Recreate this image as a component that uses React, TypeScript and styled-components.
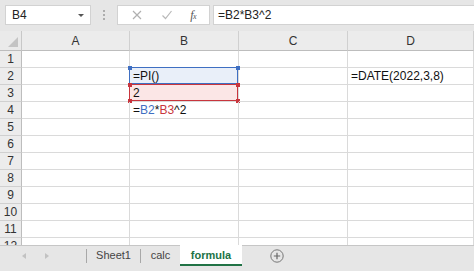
import React from "react";
import styled, { createGlobalStyle } from "styled-components";

const Global = createGlobalStyle`
  html, body { margin: 0; padding: 0; background: #ffffff; }
  body { font-family: "Liberation Sans", Arial, sans-serif; }
  * { box-sizing: border-box; }
`;

const Page = styled.div`
  width: 474px;
  height: 271px;
  display: flex;
  flex-direction: column;
  overflow: hidden;
  background: #ffffff;
`;

const FormulaBar = styled.div`
  height: 31px;
  flex: none;
  display: flex;
  align-items: center;
  gap: 0;
  padding: 5px 0 6px 5px;
  background: #e6e6e6;
`;

const NameBox = styled.div`
  width: 86px;
  height: 20px;
  background: #fff;
  border: 1px solid #d2d2d2;
  display: flex;
  align-items: center;
  justify-content: space-between;
  padding: 0 6px 0 6px;
  font-size: 12px;
  color: #222;
`;

const Caret = styled.span`
  width: 0;
  height: 0;
  border-left: 3px solid transparent;
  border-right: 3px solid transparent;
  border-top: 3px solid #555;
`;

const Dots = styled.div`
  width: 26px;
  display: flex;
  flex-direction: column;
  align-items: center;
  gap: 2px;
  span {
    width: 2px;
    height: 2px;
    background: #9a9a9a;
    border-radius: 50%;
  }
`;

const FxBox = styled.div`
  width: 93px;
  height: 20px;
  background: #fff;
  border: 1px solid #d2d2d2;
  display: flex;
  align-items: center;
  justify-content: space-around;
  padding: 0 4px;
`;

const FxText = styled.span`
  font-family: "Liberation Serif", "Times New Roman", serif;
  font-style: italic;
  font-size: 12px;
  color: #555;
  letter-spacing: -0.5px;
  sub { font-size: 8px; vertical-align: baseline; }
`;

const FormulaInput = styled.div`
  flex: 1;
  height: 20px;
  margin-left: 3px;
  background: #fff;
  border: 1px solid #d2d2d2;
  border-right: none;
  display: flex;
  align-items: center;
  padding-left: 4px;
  font-size: 12px;
  color: #222;
`;

const Grid = styled.div`
  flex: 1;
  display: grid;
  grid-template-columns: 22px 108px 109px 109px 1fr;
  grid-template-rows: 20px;
  grid-auto-rows: 17px;
  overflow: hidden;
  font-size: 12px;
`;

const Corner = styled.div`
  background: #eaeaea;
  border-right: 1px solid #c8c8c8;
  border-bottom: 1px solid #bdbdbd;
  position: relative;
  &::after {
    content: "";
    position: absolute;
    right: 3px;
    bottom: 3px;
    width: 0;
    height: 0;
    border-left: 10px solid transparent;
    border-bottom: 10px solid #c4c4c4;
  }
`;

const ColHead = styled.div`
  background: #ececec;
  border-right: 1px solid #d0d0d0;
  border-bottom: 1px solid #bdbdbd;
  display: flex;
  align-items: center;
  justify-content: center;
  color: #333;
  padding-top: 1px;
`;

const RowHead = styled.div`
  background: #ececec;
  border-right: 1px solid #bdbdbd;
  border-bottom: 1px solid #d0d0d0;
  display: flex;
  align-items: center;
  justify-content: center;
  color: #333;
`;

const Cell = styled.div`
  position: relative;
  border-right: 1px solid #dadada;
  border-bottom: 1px solid #dadada;
  display: flex;
  align-items: center;
  padding-left: 3px;
  color: #111;
  white-space: nowrap;
  overflow: visible;
`;

const Highlight = styled.div<{ $color: string; $fill: string }>`
  position: absolute;
  left: -1px;
  top: -1px;
  right: 0;
  bottom: 0;
  border: 1.5px solid ${(p) => p.$color};
  background: ${(p) => p.$fill};
  z-index: 0;
  pointer-events: none;
`;

const Handle = styled.span<{ $color: string; $x: "l" | "r"; $y: "t" | "b" }>`
  position: absolute;
  width: 4px;
  height: 4px;
  background: ${(p) => p.$color};
  ${(p) => (p.$x === "l" ? "left: -2.5px;" : "right: -2.5px;")}
  ${(p) => (p.$y === "t" ? "top: -2.5px;" : "bottom: -2.5px;")}
`;

const CellText = styled.span`
  position: relative;
  z-index: 1;
`;

const Ref = styled.span<{ $color: string }>`
  color: ${(p) => p.$color};
`;

const TabBar = styled.div`
  height: 26px;
  flex: none;
  display: flex;
  align-items: flex-start;
  background: #e6e6e6;
  border-top: 1px solid #c6c6c6;
  font-size: 11px;
  color: #444;
`;

const NavArea = styled.div`
  width: 86px;
  height: 20px;
  display: flex;
  align-items: center;
  padding-left: 22px;
  gap: 19px;
`;

const Arrow = styled.span<{ $dir: "l" | "r" }>`
  width: 0;
  height: 0;
  border-top: 3px solid transparent;
  border-bottom: 3px solid transparent;
  ${(p) =>
    p.$dir === "l"
      ? "border-right: 4px solid #c2c2c2;"
      : "border-left: 4px solid #c2c2c2;"}
`;

const Tab = styled.div<{ $active?: boolean; $w: number }>`
  width: ${(p) => p.$w}px;
  height: 21px;
  display: flex;
  align-items: center;
  justify-content: center;
  position: relative;
  background: ${(p) => (p.$active ? "#ffffff" : "transparent")};
  color: ${(p) => (p.$active ? "#217346" : "#444")};
  font-weight: ${(p) => (p.$active ? 700 : 400)};
  margin-top: -1px;
  border-bottom: ${(p) => (p.$active ? "2px solid #217346" : "2px solid transparent")};
  padding-top: 1px;
`;

const Sep = styled.div`
  width: 1px;
  height: 14px;
  margin-top: 3px;
  background: #a8a8a8;
`;

const AddBtn = styled.div`
  margin-left: 28px;
  margin-top: 3px;
  width: 14px;
  height: 14px;
  display: flex;
  align-items: center;
  justify-content: center;
`;

const cols = ["A", "B", "C", "D"];
const BLUE = "#3f6fc2";
const RED = "#c8353d";

export default function App() {
  const rows = Array.from({ length: 12 }, (_, i) => i + 1);

  const renderCell = (r: number, c: number) => {
    if (c === 1 && r === 2) {
      return (
        <Cell key={`${r}-${c}`}>
          <Highlight $color={BLUE} $fill="#e9eff9">
            <Handle $color={BLUE} $x="l" $y="t" />
            <Handle $color={BLUE} $x="r" $y="t" />
          </Highlight>
          <CellText>=PI()</CellText>
        </Cell>
      );
    }
    if (c === 1 && r === 3) {
      return (
        <Cell key={`${r}-${c}`}>
          <Highlight $color={RED} $fill="#fbe6e6">
            <Handle $color={RED} $x="l" $y="t" />
            <Handle $color={RED} $x="r" $y="t" />
            <Handle $color={RED} $x="l" $y="b" />
            <Handle $color={RED} $x="r" $y="b" />
          </Highlight>
          <CellText>2</CellText>
        </Cell>
      );
    }
    if (c === 1 && r === 4) {
      return (
        <Cell key={`${r}-${c}`}>
          <CellText>
            =<Ref $color={BLUE}>B2</Ref>*<Ref $color={RED}>B3</Ref>^2
          </CellText>
        </Cell>
      );
    }
    if (c === 3 && r === 2) {
      return (
        <Cell key={`${r}-${c}`}>
          <CellText>=DATE(2022,3,8)</CellText>
        </Cell>
      );
    }
    return <Cell key={`${r}-${c}`} />;
  };

  return (
    <>
      <Global />
      <Page>
        <FormulaBar>
          <NameBox>
            <span>B4</span>
            <Caret />
          </NameBox>
          <Dots>
            <span />
            <span />
            <span />
          </Dots>
          <FxBox>
            <svg width="12" height="12" viewBox="0 0 12 12">
              <path d="M2 2 L10 10 M10 2 L2 10" stroke="#b0b0b0" strokeWidth="1.2" fill="none" />
            </svg>
            <svg width="12" height="12" viewBox="0 0 12 12">
              <path d="M1.5 6.5 L4.5 9.5 L10.5 2" stroke="#b8b8b8" strokeWidth="1.2" fill="none" />
            </svg>
            <FxText>
              f<sub>x</sub>
            </FxText>
          </FxBox>
          <FormulaInput>=B2*B3^2</FormulaInput>
        </FormulaBar>
        <Grid>
          <Corner />
          {cols.map((c) => (
            <ColHead key={c}>{c}</ColHead>
          ))}
          {rows.map((r) => (
            <React.Fragment key={r}>
              <RowHead>{r}</RowHead>
              {cols.map((_, ci) => renderCell(r, ci))}
            </React.Fragment>
          ))}
        </Grid>
        <TabBar>
          <NavArea>
            <Arrow $dir="l" />
            <Arrow $dir="r" />
          </NavArea>
          <Sep />
          <Tab $w={53}>Sheet1</Tab>
          <Sep />
          <Tab $w={39}>calc</Tab>
          <Tab $active $w={62}>formula</Tab>
          <AddBtn>
            <svg width="14" height="14" viewBox="0 0 14 14">
              <circle cx="7" cy="7" r="6.2" stroke="#777" strokeWidth="1" fill="none" />
              <path d="M7 3.8 V10.2 M3.8 7 H10.2" stroke="#666" strokeWidth="1.2" />
            </svg>
          </AddBtn>
        </TabBar>
      </Page>
    </>
  );
}
